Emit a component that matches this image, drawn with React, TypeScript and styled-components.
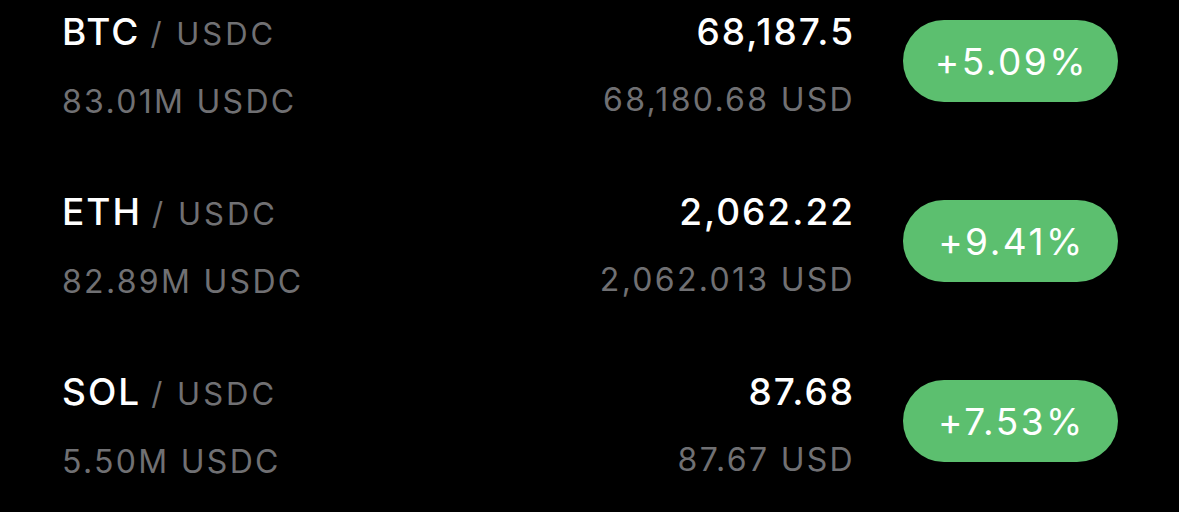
import styled, { createGlobalStyle } from 'styled-components';

interface Market {
  base: string;
  quote: string;
  volume: string;
  price: string;
  fiat: string;
  change: string;
}

const markets: Market[] = [
  { base: 'BTC', quote: 'USDC', volume: '83.01M USDC', price: '68,187.5', fiat: '68,180.68 USD', change: '+5.09%' },
  { base: 'ETH', quote: 'USDC', volume: '82.89M USDC', price: '2,062.22', fiat: '2,062.013 USD', change: '+9.41%' },
  { base: 'SOL', quote: 'USDC', volume: '5.50M USDC', price: '87.68', fiat: '87.67 USD', change: '+7.53%' },
];

export default function App() {
  return (
    <>
      <GlobalStyle />
      <List aria-label="Markets">
        {markets.map((m) => (
          <Row key={m.base}>
            <PairCell>
              <Pair>
                <Base>{m.base}</Base>
                <Quote>/ {m.quote}</Quote>
              </Pair>
              <SubText>{m.volume}</SubText>
            </PairCell>
            <PriceCell>
              <Price>{m.price}</Price>
              <SubText>{m.fiat}</SubText>
            </PriceCell>
            <ChangePill>{m.change}</ChangePill>
          </Row>
        ))}
      </List>
    </>
  );
}

const GlobalStyle = createGlobalStyle`
  html, body {
    margin: 0;
    padding: 0;
    background: #000000;
  }

  body {
    font-family: Inter, "Noto Sans", "Liberation Sans", sans-serif;
    -webkit-font-smoothing: antialiased;
  }
`;

const List = styled.ul`
  margin: 0;
  padding: 0 61px 0 62px;
  list-style: none;
  width: 1179px;
  height: 512px;
  box-sizing: border-box;
  overflow: hidden;
`;

const Row = styled.li`
  height: 180px;
  box-sizing: border-box;
  padding-top: 10px;
  display: grid;
  grid-template-columns: minmax(0, 1fr) auto 215px;
  column-gap: 50px;
  align-items: start;
`;

const PairCell = styled.div`
  display: flex;
  flex-direction: column;
  gap: 25px;
`;

const PriceCell = styled(PairCell)`
  align-items: flex-end;
  margin-right: -2px;
`;

const Pair = styled.div`
  display: flex;
  align-items: baseline;
  gap: 10px;
  line-height: 44px;
  white-space: nowrap;
`;

const Base = styled.span`
  color: #ffffff;
  font-size: 37px;
  font-weight: 500;
  letter-spacing: 2px;
`;

const Quote = styled.span`
  color: #707073;
  font-size: 31px;
  font-weight: 400;
  letter-spacing: 3px;
`;

const Price = styled.span`
  color: #ffffff;
  font-size: 37px;
  font-weight: 500;
  line-height: 44px;
  letter-spacing: 2px;
  white-space: nowrap;
`;

const SubText = styled.span`
  color: #707073;
  font-size: 32px;
  font-weight: 400;
  line-height: 41px;
  letter-spacing: 2.3px;
  white-space: nowrap;
`;

const ChangePill = styled.span`
  margin-top: 10px;
  height: 82px;
  display: flex;
  align-items: center;
  justify-content: center;
  padding-left: 2px;
  border-radius: 41px;
  background: #5cbf6f;
  color: #ffffff;
  font-size: 37px;
  font-weight: 400;
  letter-spacing: 2.5px;
`;
